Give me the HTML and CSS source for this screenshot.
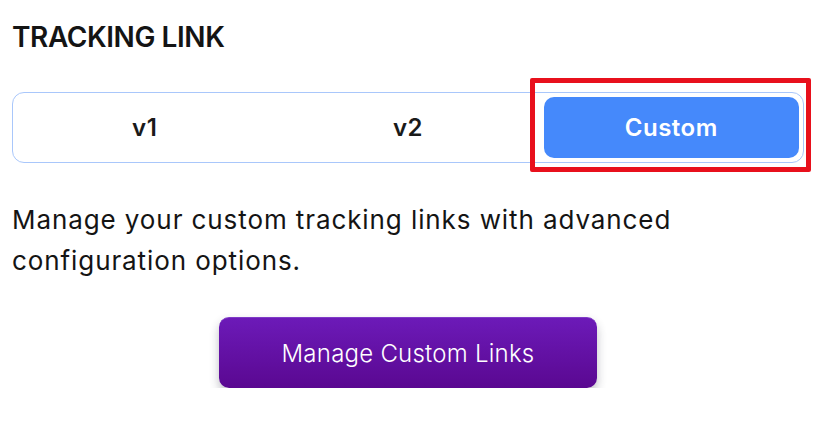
FILE: index.html
```html
<!DOCTYPE html>
<html lang="en">
<head>
<meta charset="utf-8">
<title>Tracking Link</title>
<link rel="stylesheet" href="styles.css">
</head>
<body>
<section class="panel">
  <h2 class="title">TRACKING LINK</h2>
  <div class="segmented">
    <button class="seg">v1</button>
    <button class="seg">v2</button>
    <button class="seg seg-active">Custom</button>
    <span class="highlight"></span>
  </div>
  <p class="desc">Manage your custom tracking links with advanced configuration options.</p>
  <div class="actions">
    <button class="primary">Manage Custom Links</button>
  </div>
</section>
</body>
</html>
```

FILE: styles.css
```css
html, body {
  margin: 0;
  padding: 0;
  background: #ffffff;
}

body {
  font-family: Inter, "Noto Sans", sans-serif;
  color: #141414;
}

.panel {
  padding: 21px 12px 0 12px;
  width: 792px;
}

.title {
  margin: 0;
  font-size: 28px;
  line-height: 32px;
  font-weight: 600;
  letter-spacing: -0.015em;
  color: #141414;
}

.segmented {
  position: relative;
  margin-top: 39px;
  display: flex;
  gap: 8px;
  padding: 4px;
  border: 1.5px solid #a9c7fb;
  border-radius: 12px;
  height: 61px;
}

.seg {
  flex: 1;
  border: 0;
  background: transparent;
  border-radius: 10px;
  font-family: Inter, "Noto Sans", sans-serif;
  font-size: 24px;
  font-weight: 600;
  letter-spacing: 0.02em;
  color: #1a1a1a;
  cursor: pointer;
}

.seg-active {
  background: #4589fb;
  color: #ffffff;
}

.highlight {
  position: absolute;
  left: 517px;
  top: -15px;
  width: 271px;
  height: 84px;
  border: 5px solid #e8101c;
  border-radius: 2px;
  pointer-events: none;
}

.desc {
  margin: 36px 0 0 0;
  font-size: 26px;
  line-height: 41px;
  font-weight: 400;
  color: #141414;
  letter-spacing: 0.035em;
}

.actions {
  display: flex;
  justify-content: center;
  margin-top: 36px;
}

.primary {
  width: 378px;
  height: 71px;
  border: 0;
  border-top: 1px solid #7f3ac6;
  border-radius: 10px;
  background: linear-gradient(#6c1ab8, #5a0891);
  box-shadow: 0 5px 10px rgba(40, 40, 60, 0.3);
  color: #ffffff;
  font-family: Inter, "Noto Sans", sans-serif;
  font-size: 24px;
  font-weight: 300;
  letter-spacing: 0.01em;
  cursor: pointer;
}
```
